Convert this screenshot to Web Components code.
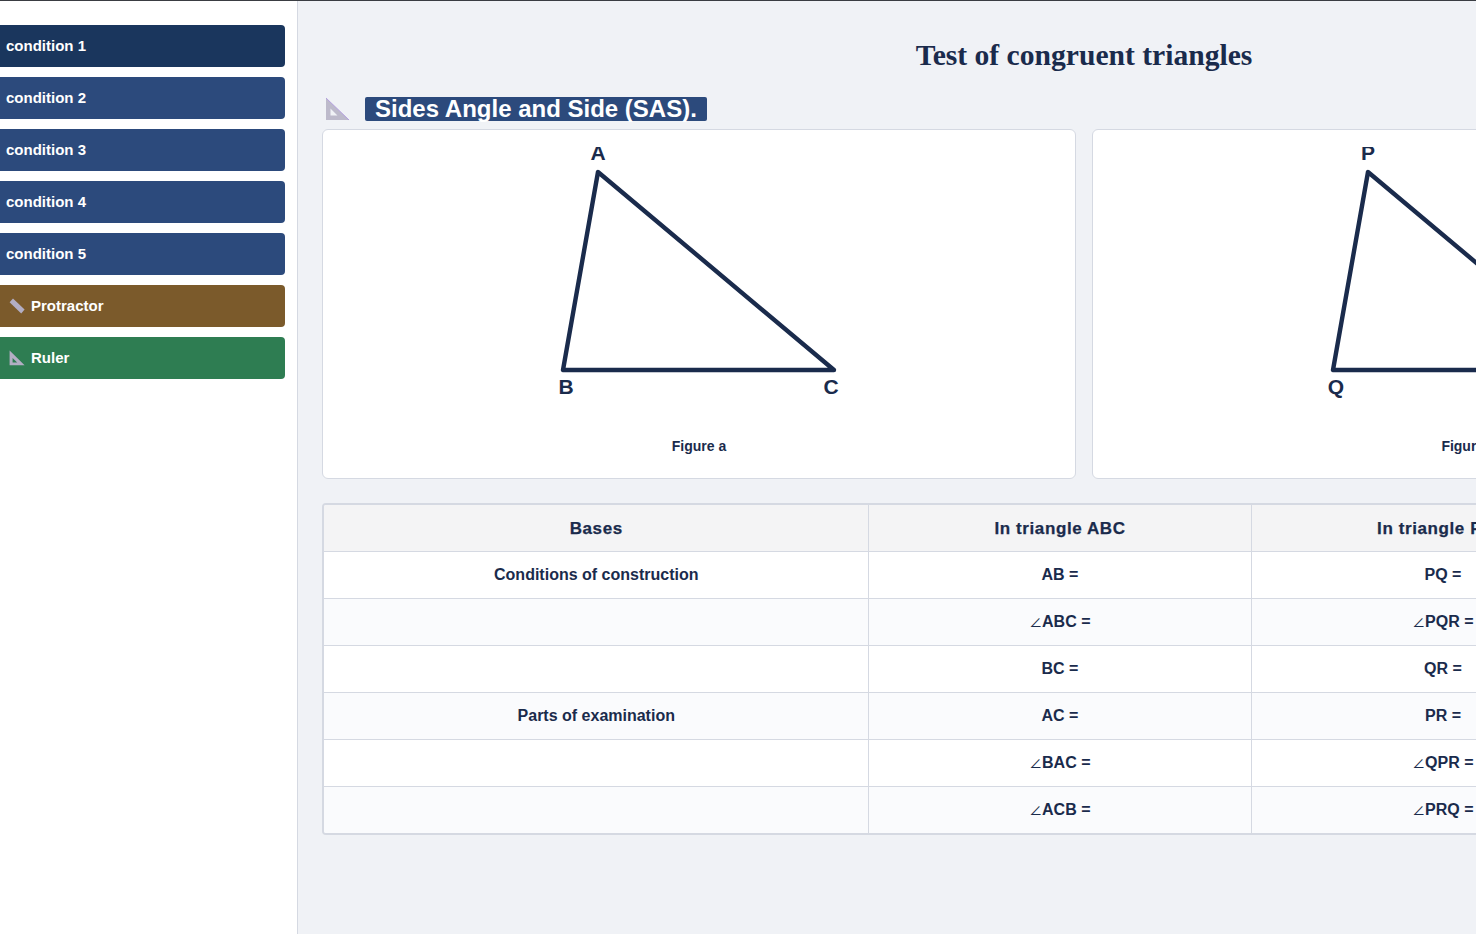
<!DOCTYPE html>
<html>
<head>
<meta charset="utf-8">
<title>Test of congruent triangles</title>
<style>
    html, body { margin: 0; height: 100%; overflow: hidden; background: #f0f2f6; }
    body { font-family: "Liberation Sans", Arial, sans-serif; color: #1a2b4c; }
</style>
</head>
<body>
<app-shell>
    <side-bar slot="side">
        <side-button active>condition 1</side-button>
        <side-button>condition 2</side-button>
        <side-button>condition 3</side-button>
        <side-button>condition 4</side-button>
        <side-button>condition 5</side-button>
        <side-button tone="brown" icon="ruler">Protractor</side-button>
        <side-button tone="green" icon="square">Ruler</side-button>
    </side-bar>
    <main-panel heading="Test of congruent triangles" section="Sides Angle and Side (SAS).">
        <triangle-card names="A,B,C" caption="Figure a"></triangle-card>
        <triangle-card names="P,Q,R" caption="Figure b"></triangle-card>
        <compare-table slot="table"></compare-table>
    </main-panel>
</app-shell>

<script>
const ICONS = {
    ruler: `<svg width="16" height="16" viewBox="0 0 16 16"><path d="M4 .6 15.6 11.6 12.2 15.4 .6 4.2Z" fill="#b3aec4"/></svg>`,
    square: `<svg width="16" height="16" viewBox="0 0 16 16"><path fill-rule="evenodd" d="M.6 .4 15.6 15.2H.6ZM3.6 8V12.4H8.2Z" fill="#b3aec4"/></svg>`
};

class AppShell extends HTMLElement {
    constructor () {
        super();
        var shadowRoot = this.attachShadow({mode: 'open'});
        shadowRoot.innerHTML = `
            <style>
                :host {
                    display: flex;
                    width: 1476px;
                    height: 934px;
                    box-sizing: border-box;
                    border-top: 1px solid #3a3d42;
                    overflow: hidden;
                }
            </style>
            <slot name="side"></slot>
            <slot></slot>
        `;
    }
}
customElements.define('app-shell', AppShell);

class SideBar extends HTMLElement {
    constructor () {
        super();
        var shadowRoot = this.attachShadow({mode: 'open'});
        shadowRoot.innerHTML = `
            <style>
                :host {
                    flex: none;
                    display: flex;
                    flex-direction: column;
                    gap: 10px;
                    box-sizing: border-box;
                    width: 298px;
                    padding: 24px 12px 0 0;
                    background: #fff;
                    border-right: 1px solid #d5d9e2;
                    overflow: hidden;
                }
            </style>
            <slot></slot>
        `;
    }
}
customElements.define('side-bar', SideBar);

class SideButton extends HTMLElement {
    constructor () {
        super();
        var shadowRoot = this.attachShadow({mode: 'open'});
        var icon = ICONS[this.getAttribute('icon')] || '';
        shadowRoot.innerHTML = `
            <style>
                :host {
                    display: flex;
                    align-items: center;
                    gap: 6px;
                    box-sizing: border-box;
                    height: 42px;
                    margin-left: -10px;
                    padding: 0 0 2px 16px;
                    border-radius: 4px;
                    background: #2c4a7c;
                    color: #fff;
                    font: bold 15px "Liberation Sans", Arial, sans-serif;
                }
                :host([active]) { background: #1a365d; }
                :host([tone="brown"]) { background: #7b5a2b; }
                :host([tone="green"]) { background: #2e7d52; }
                :host([icon]) { padding-left: 19px; }
                svg { display: block; margin-top: 1px; }
            </style>
            ${icon}<slot></slot>
        `;
    }
}
customElements.define('side-button', SideButton);

class MainPanel extends HTMLElement {
    constructor () {
        super();
        var shadowRoot = this.attachShadow({mode: 'open'});
        shadowRoot.innerHTML = `
            <style>
                :host {
                    flex: none;
                    display: block;
                    box-sizing: border-box;
                    width: 1572px;
                    padding: 0 24px;
                    background: #f0f2f6;
                }
                h1 {
                    margin: 0;
                    padding-top: 38px;
                    height: 58px;
                    text-align: center;
                    font: bold 29.6px/33px "Liberation Serif", "Times New Roman", serif;
                    color: #1a2b4c;
                }
                .section {
                    display: flex;
                    align-items: flex-start;
                    height: 32px;
                    padding-left: 3px;
                    gap: 15px;
                }
                .section svg { display: block; }
                .section span {
                    display: block;
                    height: 24px;
                    padding: 0 10px;
                    border-radius: 2px;
                    background: #2c4a7c;
                    color: #fff;
                    font: bold 24px/24px "Liberation Sans", Arial, sans-serif;
                    white-space: nowrap;
                }
                .cards {
                    display: grid;
                    grid-template-columns: 1fr 1fr;
                    gap: 16px;
                    margin-bottom: 24px;
                }
            </style>
            <h1></h1>
            <div class="section">
                <svg width="25" height="24" viewBox="0 0 25 24"><path fill-rule="evenodd" d="M1 1 24 23H1ZM5.5 11.5V18.5H12.5Z" fill="#bdbacb"/><path d="M1 1 24 23" stroke="#b49fe0" fill="none"/></svg>
                <span></span>
            </div>
            <div class="cards"><slot></slot></div>
            <slot name="table"></slot>
        `;
        shadowRoot.querySelector('h1').textContent = this.getAttribute('heading');
        shadowRoot.querySelector('.section span').textContent = this.getAttribute('section');
    }
}
customElements.define('main-panel', MainPanel);

class TriangleCard extends HTMLElement {
    constructor () {
        super();
        var names = this.getAttribute('names').split(',');
        var shadowRoot = this.attachShadow({mode: 'open'});
        shadowRoot.innerHTML = `
            <style>
                :host {
                    display: flex;
                    flex-direction: column;
                    align-items: center;
                    box-sizing: border-box;
                    height: 350px;
                    padding-top: 17px;
                    border: 1px solid #d5d9e2;
                    border-radius: 6px;
                    background: #fff;
                }
                svg { display: block; flex: none; }
                text { font: bold 21px "Liberation Sans", Arial, sans-serif; fill: #1a2b4c; text-anchor: middle; }
                p {
                    margin: 0;
                    padding-top: 8px;
                    font: bold 14px/18px "Liberation Sans", Arial, sans-serif;
                    color: #1a2b4c;
                }
            </style>
            <svg width="400" height="282" viewBox="0 0 400 282">
                <polygon points="99,25 64,223 335,223" fill="none" stroke="#1a2b4c" stroke-width="4.4" stroke-linejoin="round"/>
                <text x="99" y="13">${names[0]}</text>
                <text x="67" y="247">${names[1]}</text>
                <text x="332" y="247">${names[2]}</text>
            </svg>
            <p></p>
        `;
        shadowRoot.querySelector('p').textContent = this.getAttribute('caption');
    }
}
customElements.define('triangle-card', TriangleCard);

class CompareTable extends HTMLElement {
    constructor () {
        super();
        var angle = '<span class="angle">∠</span>';
        var rows = [
            ['Conditions of construction', 'AB =', 'PQ ='],
            ['', angle + 'ABC =', angle + 'PQR ='],
            ['', 'BC =', 'QR ='],
            ['Parts of examination', 'AC =', 'PR ='],
            ['', angle + 'BAC =', angle + 'QPR ='],
            ['', angle + 'ACB =', angle + 'PRQ =']
        ];
        var body = rows.map(r => `<tr><td>${r[0]}</td><td>${r[1]}</td><td>${r[2]}</td><td></td></tr>`).join('');
        var shadowRoot = this.attachShadow({mode: 'open'});
        shadowRoot.innerHTML = `
            <style>
                :host {
                    display: block;
                    box-sizing: border-box;
                    width: 1524px;
                    border: 1px solid #d5d9e2;
                    border-width: 2px 1px 2px 2px;
                    border-radius: 4px;
                    overflow: hidden;
                    background: #fff;
                }
                table {
                    width: 100%;
                    border-collapse: collapse;
                    table-layout: fixed;
                    font: bold 16px/18px "Liberation Sans", "Noto Sans CJK SC", sans-serif;
                    color: #1a2b4c;
                }
                th, td {
                    height: 46px;
                    padding: 0 0 0 1px;
                    text-align: center;
                    border: 1px solid #d5d9e2;
                }
                tr > :first-child { border-left: 0; }
                tr > :last-child { border-right: 0; }
                thead th {
                    height: 45px;
                    padding-top: 1px;
                    border-top: 0;
                    background: #f4f4f5;
                    font-size: 17px;
                    letter-spacing: .6px;
                    -webkit-text-stroke: .25px #1a2b4c;
                }
                tbody tr:last-child td { border-bottom: 0; }
                tbody tr:nth-child(even) td { background: #fafbfd; }
                .angle { font-size: 12.5px; font-weight: normal; }
            </style>
            <table>
                <colgroup><col style="width:544px"><col style="width:383px"><col style="width:383px"><col></colgroup>
                <thead><tr><th>Bases</th><th>In triangle ABC</th><th>In triangle PQR</th><th></th></tr></thead>
                <tbody>${body}</tbody>
            </table>
        `;
    }
}
customElements.define('compare-table', CompareTable);
</script>
</body>
</html>
